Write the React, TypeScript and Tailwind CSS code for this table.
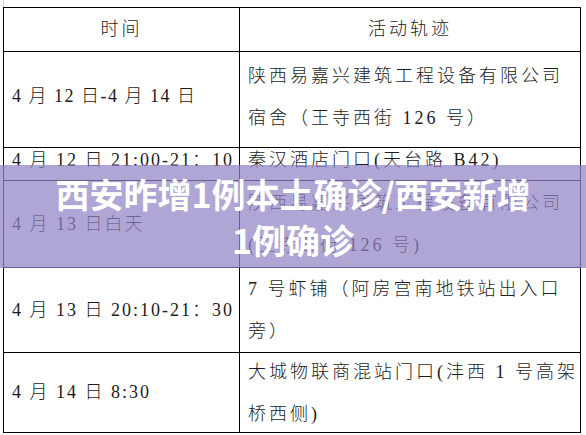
const rows = [
  {
    h: "h-[96px]",
    pad: "pb-[6px]",
    track: "tracking-[1.5px]",
    left: "4 月 12 日-4 月 14 日",
    right: ["陕西易嘉兴建筑工程设备有限公司", "宿舍（王寺西街 126 号）"],
  },
  {
    h: "h-[33px]",
    pad: "pb-[8px]",
    track: "tracking-[2px]",
    left: "4 月 12 日 21:00-21：10",
    right: ["秦汉酒店门口(天台路 B42)"],
  },
  {
    h: "h-[87px]",
    pad: "",
    track: "tracking-[2px]",
    left: "4 月 13 日白天",
    right: ["陕西易嘉兴建筑工程设备有限公司", "(王寺西街 126 号)"],
  },
  {
    h: "h-[85px]",
    pad: "",
    track: "tracking-[2px]",
    left: "4 月 13 日 20:10-21：30",
    right: ["7 号虾铺（阿房宫南地铁站出入口", "旁）"],
  },
  {
    h: "h-[80px]",
    pad: "",
    track: "tracking-[2px]",
    left: "4 月 14 日 8:30",
    right: ["大城物联商混站门口(沣西 1 号高架", "桥西侧)"],
  },
]

export default function App() {
  return (
    <div className="relative w-[586px] h-[435px] overflow-hidden bg-white text-[#1c1c1c] [font-family:'Liberation_Serif','Noto_Sans_CJK_SC',serif] font-light text-[18px]">
      <div className="h-[7px] ml-[3px] border-l border-gray-300" />
      <div className="ml-[3px] w-[578px] border border-black">
        <div className="flex h-[43px]">
          <div className="w-[236px] border-r border-black flex items-center justify-center tracking-[3px]">
            时间
          </div>
          <div className="flex-1 flex items-center justify-center tracking-[3px]">活动轨迹</div>
        </div>
        {rows.map((row, i) => (
          <div key={i} className={`flex border-t border-black ${row.h}`}>
            <div className={`w-[236px] border-r border-black flex items-center pl-[8px] whitespace-nowrap ${row.track} ${row.pad}`}>
              {row.left}
            </div>
            <div className={`flex-1 flex flex-col justify-center pl-[8px] tracking-[3px] leading-[42px] whitespace-nowrap ${row.pad}`}>
              {row.right.map((line) => (
                <div key={line} className={row.right.length === 1 ? "leading-[22px]" : ""}>
                  {line}
                </div>
              ))}
            </div>
          </div>
        ))}
      </div>

      {/* title banner over the table */}
      <div className="absolute left-0 right-0 top-[165px] h-[103px] bg-[rgba(146,131,197,0.72)] flex flex-col items-center justify-center text-white font-bold text-[34px] leading-[46px] [font-family:'Noto_Sans_CJK_SC',sans-serif]">
        <div>西安昨增1例本土确诊/西安新增</div>
        <div>1例确诊</div>
      </div>
    </div>
  )
}
